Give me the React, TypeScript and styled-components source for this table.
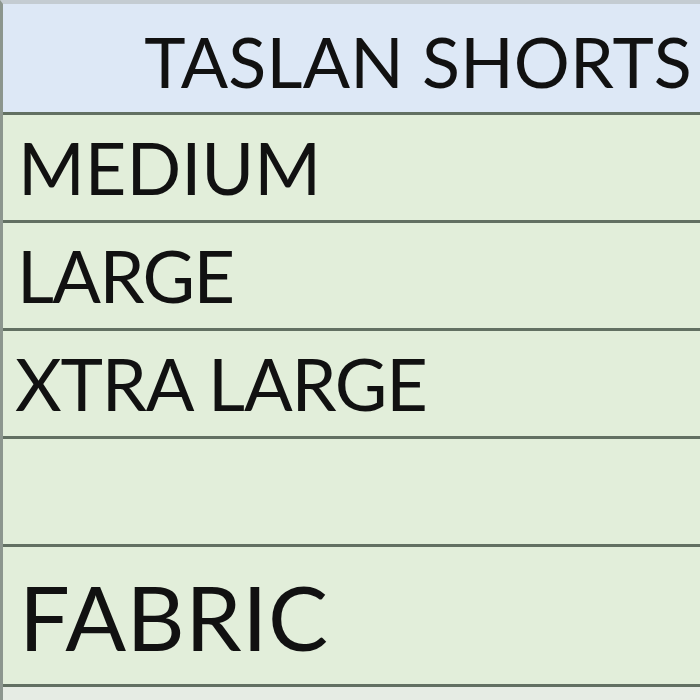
import React from "react";
import styled, { createGlobalStyle } from "styled-components";

const Global = createGlobalStyle`
  html, body { margin: 0; padding: 0; background: #e6ece4; }
  body { width: 700px; height: 700px; overflow: hidden; }
`;

const Sheet = styled.div`
  width: 700px;
  height: 700px;
  display: flex;
  flex-direction: column;
  border-top: 4px solid #c4ccd2;
  border-left: 3px solid #8c968e;
  box-sizing: border-box;
  font-family: "Lato", "Open Sans", sans-serif;
  color: #111;
  background: #e6ece4;
`;

const Row = styled.div<{ $h: number; $bg: string; $align?: string }>`
  height: ${(p) => p.$h}px;
  flex: none;
  box-sizing: border-box;
  background: ${(p) => p.$bg};
  border-bottom: 3px solid #627062;
  display: flex;
  align-items: flex-end;
  justify-content: ${(p) => p.$align || "flex-start"};
  overflow: hidden;
  white-space: nowrap;
`;

const Cell = styled.span<{ $size: number; $pb: number; $pl?: number; $pr?: number; $ls?: number }>`
  font-size: ${(p) => p.$size}px;
  line-height: 1;
  padding-bottom: ${(p) => p.$pb}px;
  padding-left: ${(p) => p.$pl ?? 0}px;
  padding-right: ${(p) => p.$pr ?? 0}px;
  letter-spacing: ${(p) => p.$ls ?? 0}px;
`;

const BLUE = "#dde8f6";
const GREEN = "#e2eeda";

export default function App() {
  return (
    <>
      <Global />
      <Sheet>
        <Row $h={111} $bg={BLUE} $align="flex-end">
          <Cell $size={70} $pb={16} $pr={8} $ls={0.2}>TASLAN SHORTS</Cell>
        </Row>
        <Row $h={108} $bg={GREEN}>
          <Cell $size={72} $pb={17} $pl={15}>MEDIUM</Cell>
        </Row>
        <Row $h={108} $bg={GREEN}>
          <Cell $size={72} $pb={17} $pl={14} $ls={-1.6}>LARGE</Cell>
        </Row>
        <Row $h={108} $bg={GREEN}>
          <Cell $size={72} $pb={17} $pl={12} $ls={-1.2}>XTRA LARGE</Cell>
        </Row>
        <Row $h={108} $bg={GREEN} />
        <Row $h={140} $bg={GREEN}>
          <Cell $size={90} $pb={23} $pl={16} $ls={0.5}>FABRIC</Cell>
        </Row>
      </Sheet>
    </>
  );
}
